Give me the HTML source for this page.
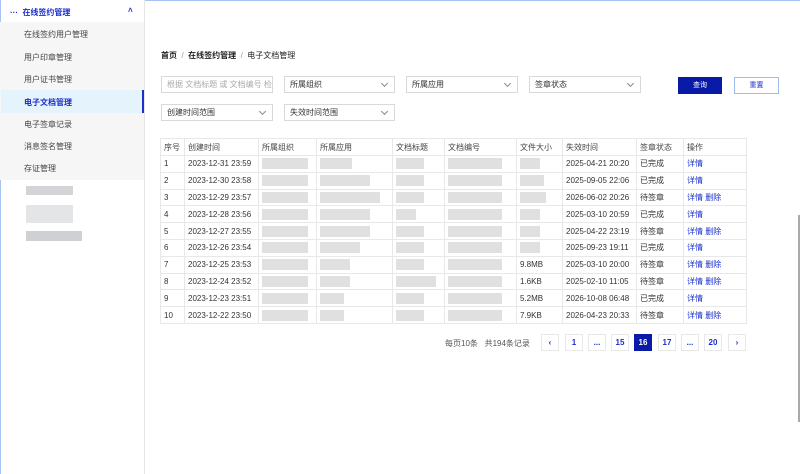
<!DOCTYPE html>
<html><head><meta charset="utf-8"><style>
*{margin:0;padding:0;box-sizing:border-box}
body{width:800px;height:474px;overflow:hidden;background:#fff;font-family:"Liberation Sans","Noto Sans CJK SC",sans-serif;font-size:8px;color:#333;position:relative}
.a{position:absolute}
.side{left:0;top:0;width:145px;height:474px;border-right:1px solid #e6e6e6;background:#fff}
.sub{left:0;top:22px;width:144px;height:158px;background:#f6f6f6}
.mi{position:absolute;left:24px;font-size:8px;color:#444}
.sel{border:1px solid #d9d9d9;height:17px;background:#fff;font-size:8px;color:#333;padding:3px 5px;line-height:10px;white-space:nowrap;overflow:hidden}
.sel.dd:after{content:"";position:absolute;right:7px;top:4px;width:4px;height:4px;border-right:1px solid #888;border-bottom:1px solid #888;transform:rotate(45deg)}
table{position:absolute;left:160px;top:138px;border-collapse:collapse;table-layout:fixed;font-size:8px}
td{border:1px solid #e8e8e8;height:16.8px;padding:0 3px;white-space:nowrap;overflow:hidden;color:#333}
tr.h td{height:17px;color:#444}
.b{display:inline-block;height:11px;background:#e0e0e0;vertical-align:middle}
.l{color:#1a2ecc}
.pg{position:absolute;top:334px;width:18px;height:17px;border:1px solid #e8e8e8;text-align:center;line-height:15px;font-size:8px;color:#1a2ecc;font-weight:bold}
</style></head><body>
<div class="a" style="left:0;top:0;width:800px;height:1px;background:#a9c2f5"></div>
<div class="a side"></div>
<div class="a" style="left:0;top:0;width:1px;height:474px;background:#a9c2f5"></div>
<div class="a sub"></div>
<div class="a" style="left:10px;top:7px;font-size:8px;color:#1a2ecc;font-weight:bold">···&nbsp; 在线签约管理</div>
<div class="a" style="left:128px;top:6px;font-size:8px;color:#1a2ecc;font-weight:bold">˄</div>
<div class="mi" style="top:29px">在线签约用户管理</div>
<div class="mi" style="top:52px">用户印章管理</div>
<div class="mi" style="top:74px">用户证书管理</div>
<div class="a" style="left:1px;top:90px;width:143px;height:23px;background:#e5f3fc"></div>
<div class="a" style="left:142px;top:90px;width:2px;height:23px;background:#1a2ecc"></div>
<div class="mi" style="top:97px;color:#1a2ecc;font-weight:bold">电子文档管理</div>
<div class="mi" style="top:119px">电子签章记录</div>
<div class="mi" style="top:141px">消息签名管理</div>
<div class="mi" style="top:163px">存证管理</div>
<div class="a" style="left:26px;top:186px;width:47px;height:9px;background:#d3d4d7"></div>
<div class="a" style="left:26px;top:205px;width:47px;height:18px;background:#e4e5e7"></div>
<div class="a" style="left:26px;top:231px;width:56px;height:10px;background:#cfd0d3"></div>

<div class="a" style="left:161px;top:50px;font-size:8px;color:#222;font-weight:bold">首页 <span style="color:#999;font-weight:normal">&nbsp;/&nbsp;</span> 在线签约管理 <span style="color:#999;font-weight:normal">&nbsp;/&nbsp;</span> <span style="font-weight:normal">电子文档管理</span></div>

<div class="a sel" style="left:161px;top:76px;width:112px;color:#aaa">根据 文档标题 或 文档编号 检</div>
<div class="a sel dd" style="left:284px;top:76px;width:111px">所属组织</div>
<div class="a sel dd" style="left:406px;top:76px;width:112px">所属应用</div>
<div class="a sel dd" style="left:529px;top:76px;width:112px">签章状态</div>
<div class="a" style="left:678px;top:77px;width:44px;height:17px;background:#0a1aa8;color:#fff;text-align:center;line-height:17px;font-size:7px">查询</div>
<div class="a" style="left:734px;top:77px;width:45px;height:17px;border:1px solid #9dbcf0;color:#1a2ecc;text-align:center;line-height:15px;font-size:7px">重置</div>
<div class="a sel dd" style="left:161px;top:104px;width:112px">创建时间范围</div>
<div class="a sel dd" style="left:284px;top:104px;width:111px">失效时间范围</div>

<table>
<colgroup><col style="width:24px"><col style="width:74px"><col style="width:58px"><col style="width:76px"><col style="width:52px"><col style="width:72px"><col style="width:46px"><col style="width:74px"><col style="width:47px"><col style="width:63px"></colgroup>
<tr class="h"><td>序号</td><td>创建时间</td><td>所属组织</td><td>所属应用</td><td>文档标题</td><td>文档编号</td><td>文件大小</td><td>失效时间</td><td>签章状态</td><td>操作</td></tr>
<tr><td>1</td><td>2023-12-31 23:59</td><td><span class="b" style="width:46px"></span></td><td><span class="b" style="width:32px"></span></td><td><span class="b" style="width:28px"></span></td><td><span class="b" style="width:54px"></span></td><td><span class="b" style="width:20px"></span></td><td>2025-04-21 20:20</td><td>已完成</td><td class="l">详情</td></tr>
<tr><td>2</td><td>2023-12-30 23:58</td><td><span class="b" style="width:46px"></span></td><td><span class="b" style="width:50px"></span></td><td><span class="b" style="width:28px"></span></td><td><span class="b" style="width:54px"></span></td><td><span class="b" style="width:24px"></span></td><td>2025-09-05 22:06</td><td>已完成</td><td class="l">详情</td></tr>
<tr><td>3</td><td>2023-12-29 23:57</td><td><span class="b" style="width:46px"></span></td><td><span class="b" style="width:60px"></span></td><td><span class="b" style="width:28px"></span></td><td><span class="b" style="width:54px"></span></td><td><span class="b" style="width:26px"></span></td><td>2026-06-02 20:26</td><td>待签章</td><td class="l">详情 删除</td></tr>
<tr><td>4</td><td>2023-12-28 23:56</td><td><span class="b" style="width:46px"></span></td><td><span class="b" style="width:50px"></span></td><td><span class="b" style="width:20px"></span></td><td><span class="b" style="width:54px"></span></td><td><span class="b" style="width:20px"></span></td><td>2025-03-10 20:59</td><td>已完成</td><td class="l">详情</td></tr>
<tr><td>5</td><td>2023-12-27 23:55</td><td><span class="b" style="width:46px"></span></td><td><span class="b" style="width:50px"></span></td><td><span class="b" style="width:28px"></span></td><td><span class="b" style="width:54px"></span></td><td><span class="b" style="width:20px"></span></td><td>2025-04-22 23:19</td><td>待签章</td><td class="l">详情 删除</td></tr>
<tr><td>6</td><td>2023-12-26 23:54</td><td><span class="b" style="width:46px"></span></td><td><span class="b" style="width:40px"></span></td><td><span class="b" style="width:28px"></span></td><td><span class="b" style="width:54px"></span></td><td><span class="b" style="width:20px"></span></td><td>2025-09-23 19:11</td><td>已完成</td><td class="l">详情</td></tr>
<tr><td>7</td><td>2023-12-25 23:53</td><td><span class="b" style="width:46px"></span></td><td><span class="b" style="width:30px"></span></td><td><span class="b" style="width:28px"></span></td><td><span class="b" style="width:54px"></span></td><td>9.8MB</td><td>2025-03-10 20:00</td><td>待签章</td><td class="l">详情 删除</td></tr>
<tr><td>8</td><td>2023-12-24 23:52</td><td><span class="b" style="width:46px"></span></td><td><span class="b" style="width:30px"></span></td><td><span class="b" style="width:40px"></span></td><td><span class="b" style="width:54px"></span></td><td>1.6KB</td><td>2025-02-10 11:05</td><td>待签章</td><td class="l">详情 删除</td></tr>
<tr><td>9</td><td>2023-12-23 23:51</td><td><span class="b" style="width:46px"></span></td><td><span class="b" style="width:24px"></span></td><td><span class="b" style="width:28px"></span></td><td><span class="b" style="width:54px"></span></td><td>5.2MB</td><td>2026-10-08 06:48</td><td>已完成</td><td class="l">详情</td></tr>
<tr><td>10</td><td>2023-12-22 23:50</td><td><span class="b" style="width:46px"></span></td><td><span class="b" style="width:24px"></span></td><td><span class="b" style="width:28px"></span></td><td><span class="b" style="width:54px"></span></td><td>7.9KB</td><td>2026-04-23 20:33</td><td>待签章</td><td class="l">详情 删除</td></tr>
</table>

<div class="a" style="left:445px;top:338px;font-size:8px;color:#555">每页10条 &nbsp; 共194条记录</div>
<div class="pg" style="left:541px">‹</div>
<div class="pg" style="left:565px">1</div>
<div class="pg" style="left:588px">...</div>
<div class="pg" style="left:611px">15</div>
<div class="pg" style="left:634px;background:#0a1aa8;border-color:#0a1aa8;color:#fff">16</div>
<div class="pg" style="left:658px">17</div>
<div class="pg" style="left:681px">...</div>
<div class="pg" style="left:704px">20</div>
<div class="pg" style="left:728px">›</div>
<div class="a" style="left:798px;top:215px;width:2px;height:207px;background:#aaa"></div>
</body></html>
